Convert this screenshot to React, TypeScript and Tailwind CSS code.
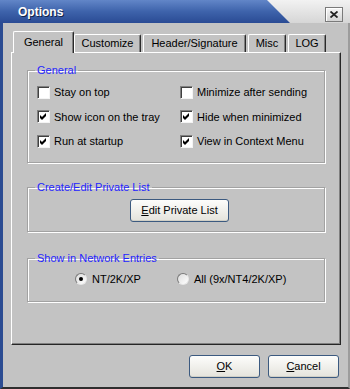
import React from "react";

const font = "font-['Liberation_Sans',Arial,sans-serif]";

function Check({ checked }: { checked?: boolean }) {
  return (
    <span className="flex h-[13px] w-[13px] shrink-0 items-center justify-center border border-t-[#808080] border-l-[#808080] border-r-[#f4f4f4] border-b-[#f4f4f4] bg-white shadow-[inset_1px_1px_0_#404040]">
      {checked ? (
        <svg width="7" height="7" viewBox="0 0 7 7">
          <polygon points="0,2 2,4 6,0 6,3 2,7 0,5" fill="#000" />
        </svg>
      ) : null}
    </span>
  );
}

function Radio({ on }: { on?: boolean }) {
  return (
    <span className="flex h-[12px] w-[12px] shrink-0 items-center justify-center rounded-full border border-t-[#7a7a7a] border-l-[#7a7a7a] border-r-[#e8e8e8] border-b-[#e8e8e8] bg-gradient-to-br from-[#dcdcdc] to-white">
      {on ? <span className="h-[4px] w-[4px] rounded-full bg-black" /> : null}
    </span>
  );
}

function Btn({ children, w }: { children: React.ReactNode; w: string }) {
  return (
    <button className={`${w} h-[23px] rounded-[3px] border border-[#3c5a80] bg-gradient-to-b from-[#fdfdfb] to-[#e4e3dc] text-[11px] text-black shadow-[inset_0_-1px_0_#d0cfc6]`}>
      {children}
    </button>
  );
}

function Group({ title, children, className }: { title: string; children: React.ReactNode; className?: string }) {
  return (
    <fieldset className={`border border-[#a2a2a2] px-[9px] shadow-[inset_1px_1px_0_#fff,1px_1px_0_#fff] ${className ?? ""}`}>
      <legend className="ml-[-2px] px-[2px] text-[11px] leading-[13px] text-[#2323ff]">{title}</legend>
      {children}
    </fieldset>
  );
}

const tabs = [
  { label: "General", cls: "ml-[10px] w-[61px] h-[22px] -mb-px z-10 bg-[#c3c3c3]" },
  { label: "Customize", cls: "w-[67px] h-[18px]" },
  { label: "Header/Signature", cls: "ml-[2px] w-[103px] h-[18px]" },
  { label: "Misc", cls: "ml-[2px] w-[38px] h-[18px]" },
  { label: "LOG", cls: "ml-[2px] w-[38px] h-[18px]" },
];

export default function App() {
  return (
    <div className={`${font} flex h-[389px] w-[350px] flex-col bg-[#c3c3c3] text-[11px] text-black`}>
      {/* title bar */}
      <div className="relative flex h-[23px] shrink-0 items-center bg-gradient-to-b from-[#f2f2f2] to-[#d6d6d6]">
        <div className="absolute inset-0 bg-gradient-to-b from-[#6286c8] via-[#3e63ab] to-[#2a4b94] [clip-path:polygon(0_0,267px_0,290px_100%,0_100%)]" />
        <span className="relative ml-[18px] text-[12px] font-bold text-white [text-shadow:1px_1px_0_#142448]">Options</span>
        <div className="relative ml-auto mr-[7px] mt-[5px] flex h-[15px] w-[18px] items-center justify-center border border-[#7a7a7a] bg-gradient-to-b from-[#f6f6f6] to-[#d4d4d4] shadow-[inset_1px_1px_0_#fff]">
          <svg width="8" height="7" viewBox="0 0 8 7">
            <path d="M0.5 0.5 L7.5 6.5 M7.5 0.5 L0.5 6.5" stroke="#222" strokeWidth="1.8" />
          </svg>
        </div>
      </div>

      <div className="flex flex-1 flex-col border-l-[3px] border-r-2 border-b-2 border-l-[#2b4c92] border-r-[#9c9c9c] border-b-[#2e2e2e]">
        {/* tabs */}
        <div className="mt-[8px] flex items-end">
          {tabs.map((t) => (
            <div
              key={t.label}
              className={`relative flex items-center justify-center rounded-t-[2px] border-t border-l border-r border-t-white border-l-white border-r-[#2a2a2a] shadow-[inset_-1px_0_0_#808080] ${t.cls}`}
            >
              {t.label}
            </div>
          ))}
        </div>

        {/* panel */}
        <div className="ml-[8px] flex h-[293px] w-[330px] flex-col border border-t-white border-l-white border-r-[#262626] border-b-[#262626] px-[15px] shadow-[inset_-1px_-1px_0_#808080]">
          <Group title="General" className="mt-[11px]">
            <div className="grid grid-cols-[143px_1fr] auto-rows-[24.5px] pt-[3px] pb-[8px]">
              <label className="flex items-center gap-[4px]"><Check />Stay on top</label>
              <label className="flex items-center gap-[4px]"><Check />Minimize after sending</label>
              <label className="flex items-center gap-[4px]"><Check checked />Show icon on the tray</label>
              <label className="flex items-center gap-[4px]"><Check checked />Hide when minimized</label>
              <label className="flex items-center gap-[4px]"><Check checked />Run at startup</label>
              <label className="flex items-center gap-[4px]"><Check checked />View in Context Menu</label>
            </div>
          </Group>

          <Group title="Create/Edit Private List" className="mt-[18px]">
            <div className="flex pt-[5px] pb-[9px] pl-[93px]">
              <Btn w="w-[99px]">
                <span className="underline">E</span>dit Private List
              </Btn>
            </div>
          </Group>

          <Group title="Show in Network Entries" className="mt-[20px]">
            <div className="flex items-center pt-[6px] pb-[14px] pl-[38px]">
              <label className="flex w-[102px] items-center gap-[5px]"><Radio on />NT/2K/XP</label>
              <label className="flex items-center gap-[5px]"><Radio />All (9x/NT4/2K/XP)</label>
            </div>
          </Group>
        </div>

        {/* buttons */}
        <div className="mt-[10px] flex justify-end gap-[8px] pr-[9px]">
          <Btn w="w-[71px]">
            <span className="underline">O</span>K
          </Btn>
          <Btn w="w-[71px]">
            <span className="underline">C</span>ancel
          </Btn>
        </div>
      </div>
    </div>
  );
}
